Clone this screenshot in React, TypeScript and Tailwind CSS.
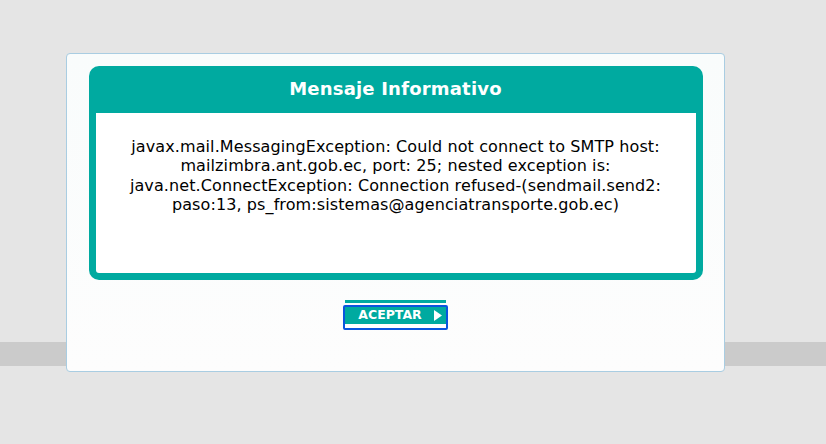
export default function App() {
  const message =
    'javax.mail.MessagingException: Could not connect to SMTP host: mailzimbra.ant.gob.ec, port: 25; nested exception is: java.net.ConnectException: Connection refused-(sendmail.send2: paso:13, ps_from:sistemas@agenciatransporte.gob.ec)'

  return (
    <div className="relative w-[826px] h-[444px] bg-[#e5e5e5] overflow-hidden font-['DejaVu_Sans',Verdana,sans-serif]">
      {/* grey band behind the dialog */}
      <div className="absolute left-0 right-0 top-[342px] h-[24px] bg-[#cbcbcb]" />

      <div className="relative pt-[53px] pl-[66px]">
        <div className="w-[659px] h-[319px] rounded-[4px] border border-[#a9cde2] bg-gradient-to-b from-[#f9fcfc] to-[#fdfdfd] pt-[12px] flex flex-col items-center">
          <div className="w-[614px] h-[214px] rounded-[10px] bg-[#00aaa0] px-[7px] pb-[7px] flex flex-col">
            <div className="h-[47px] flex items-center justify-center text-white font-bold text-[18px] tracking-[0.2px] pb-[3px]">
              Mensaje Informativo
            </div>
            <div className="flex-1 bg-white rounded-b-[3px] pt-[24px] px-[20px] text-center text-black text-[16px] tracking-[0.1px] leading-[19.4px]">
              {message}
            </div>
          </div>

          <div className="mt-[20px] flex flex-col items-center">
            <div className="w-[101px] h-[3px] bg-[#00aaa0]" />
            <button className="mt-[2px] w-[105px] h-[25px] border-2 border-[#0a55de] rounded-[2px] bg-white flex flex-col">
              <span className="h-[17px] w-full bg-[#00aaa0] flex items-center justify-center gap-[12px] text-white text-[12.5px] font-bold leading-none pl-[9px]">
                <span>ACEPTAR</span>
                <svg width="8" height="11" viewBox="0 0 8 11">
                  <path d="M0 0 L8 5.5 L0 11 Z" fill="#ffffff" />
                </svg>
              </span>
            </button>
          </div>
        </div>
      </div>
    </div>
  )
}
